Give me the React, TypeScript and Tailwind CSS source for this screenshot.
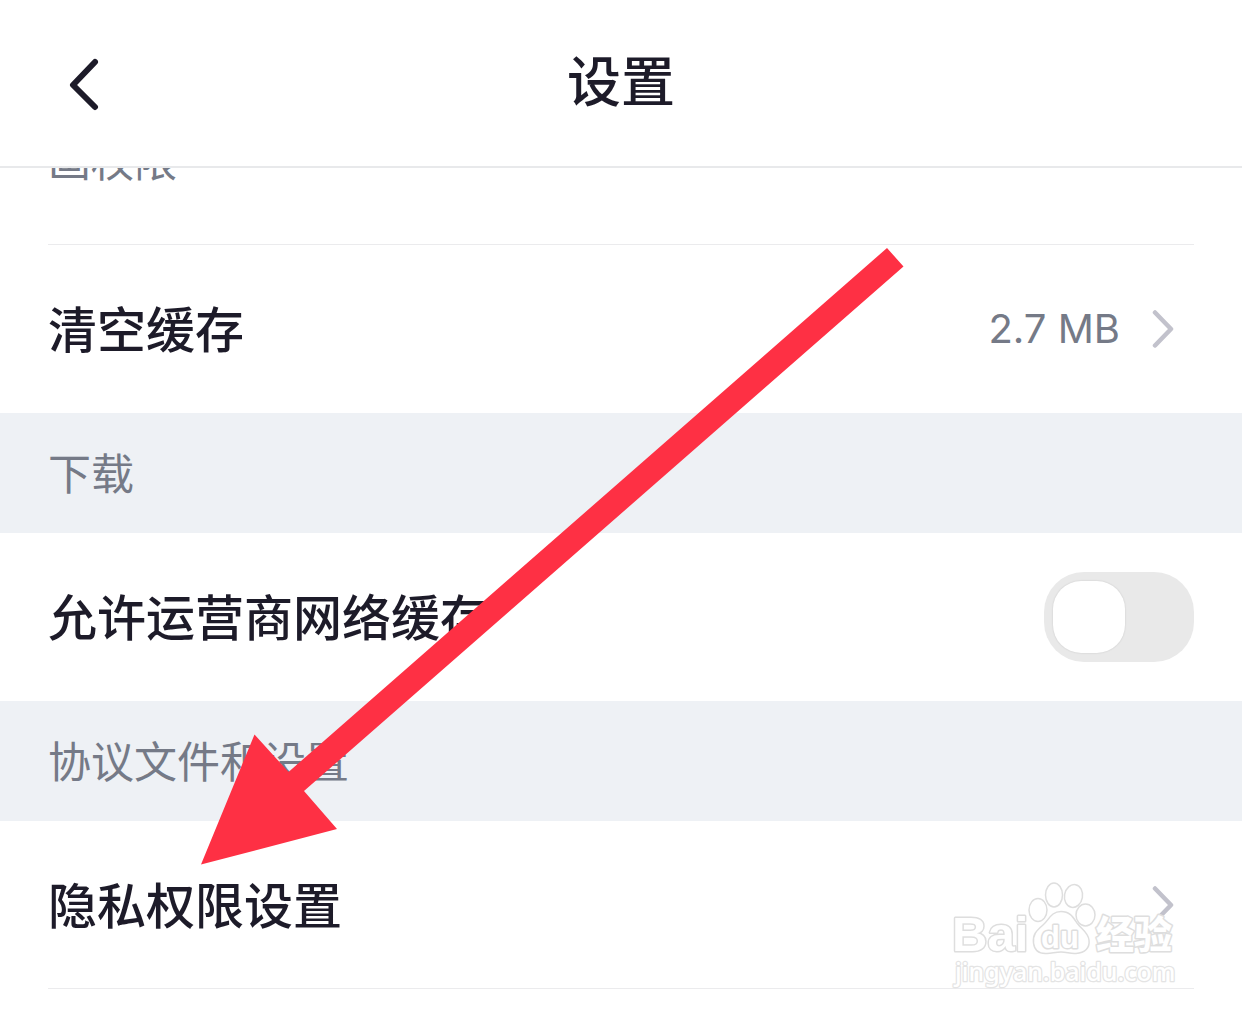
import type { ReactNode } from "react";

function Chevron() {
  return (
    <svg className="h-10 w-6 shrink-0" viewBox="0 0 24 40" fill="none" stroke="#c2c2cc" strokeWidth="4.500" strokeLinecap="round" strokeLinejoin="round" aria-hidden="true">
      <path d="M5 3.500 L21 20 L5 36.500" />
    </svg>
  );
}

function SectionTitle({ children }: { children: ReactNode }) {
  return (
    <h2 className="flex h-[120px] items-center bg-[#eef1f5] px-12 pb-1 text-[43px] leading-[60px] font-normal text-[#757a87]">
      {children}
    </h2>
  );
}

function LinkRow({ label, value }: { label: string; value?: string }) {
  return (
    <a href="#" className="flex h-[168px] items-center justify-between px-12">
      <span className="pb-1 text-[49px] leading-[72px] font-medium">{label}</span>
      <span className="flex items-center gap-[30px] pr-5 font-['Inter','Noto_Sans_CJK_SC',sans-serif] text-[40px] leading-[60px] text-[#757a87]">
        {value}
        <Chevron />
      </span>
    </a>
  );
}

function Arrow() {
  return (
    <svg className="pointer-events-none absolute top-[248px] left-[201px] h-[617px] w-[703px]" viewBox="201 248 703 617" aria-hidden="true">
      <path d="M887 248 L903.500 266.500 L304 791 L337 829 L201 864.500 L254.500 734.500 L288.500 772 Z" fill="#fe3044" />
    </svg>
  );
}

function Watermark() {
  return (
    <svg
      className="pointer-events-none absolute top-[878px] right-[62px] h-[116px] w-[232px]"
      viewBox="0 0 232 116"
      fill="#ffffff"
      stroke="#dedede"
      strokeWidth="1.500"
      strokeLinejoin="round"
      aria-hidden="true"
    >
      <ellipse cx="90" cy="32" rx="9" ry="11.500" />
      <ellipse cx="106" cy="17" rx="8.500" ry="12" />
      <ellipse cx="125.500" cy="18" rx="9" ry="11.500" transform="rotate(10 125.500 18)" />
      <ellipse cx="137.500" cy="37" rx="9.500" ry="11" />
      <path d="M113 33.500 C103 33.500 101 42 95 47 C88 53 84.500 57 85.500 65 C86.500 73 92 76 99 75.500 C105 75 108 74 113 74 C119 74 122 76 128 75.500 C137 75 142 70 141 62 C140 54 134 52 129 45 C125 39 122 33.500 113 33.500 Z" />
      <g strokeWidth="3" paintOrder="stroke">
        <text x="4" y="73" fontFamily="Liberation Sans" fontWeight="700" fontSize="49">Bai</text>
        <text x="93" y="70" fontFamily="Liberation Sans" fontWeight="700" fontSize="31">du</text>
        <text x="148" y="70" fontFamily="Noto Sans CJK SC" fontWeight="900" fontSize="38">经验</text>
      </g>
      <text x="7" y="103" fontFamily="Noto Sans" fontWeight="500" fontSize="25" strokeWidth="2.500" stroke="#e4e4e4" paintOrder="stroke">
        jingyan.baidu.com
      </text>
    </svg>
  );
}

export default function App() {
  return (
    <div className="relative min-h-screen overflow-hidden bg-white font-['Noto_Sans_CJK_SC',sans-serif] text-[#1d1b29]">
      <header className="grid h-[168px] grid-cols-[1fr_auto_1fr] items-center border-b-2 border-[#e8e9eb] px-16">
        <button type="button" aria-label="返回" className="h-14 w-10 justify-self-start">
          <svg className="h-14 w-10" viewBox="0 0 40 56" fill="none" stroke="currentColor" strokeWidth="6" strokeLinecap="round" strokeLinejoin="round" aria-hidden="true">
            <path d="M31 7 L9 30 L31 52" />
          </svg>
        </button>
        <h1 className="pb-2 text-[54px] leading-[80px] font-medium">设置</h1>
      </header>

      <main>
        <div className="px-12">
          <div className="flex h-[77px] items-end overflow-hidden border-b border-[#ebebed] pb-14">
            <p className="text-[43px] leading-[60px] text-[#757a87]">画权限</p>
          </div>
        </div>
        <LinkRow label="清空缓存" value="2.7 MB" />

        <SectionTitle>下载</SectionTitle>
        <label className="flex h-[168px] items-center justify-between px-12">
          <span className="pb-1 text-[49px] leading-[72px] font-medium">允许运营商网络缓存</span>
          <input
            type="checkbox"
            role="switch"
            className="flex h-[90px] w-[150px] shrink-0 appearance-none items-center rounded-[40px] bg-[#e9e9e9] px-[9px] before:size-[72px] before:rounded-[28px] before:bg-white before:shadow-[0_0_2px_rgba(0,0,0,0.15)] before:content-[''] checked:justify-end checked:bg-[#fe3044]"
          />
        </label>

        <SectionTitle>协议文件和设置</SectionTitle>
        <LinkRow label="隐私权限设置" />
        <hr className="mx-12 -mt-px border-[#ebebed]" />
      </main>

      <Watermark />
      <Arrow />
    </div>
  );
}
